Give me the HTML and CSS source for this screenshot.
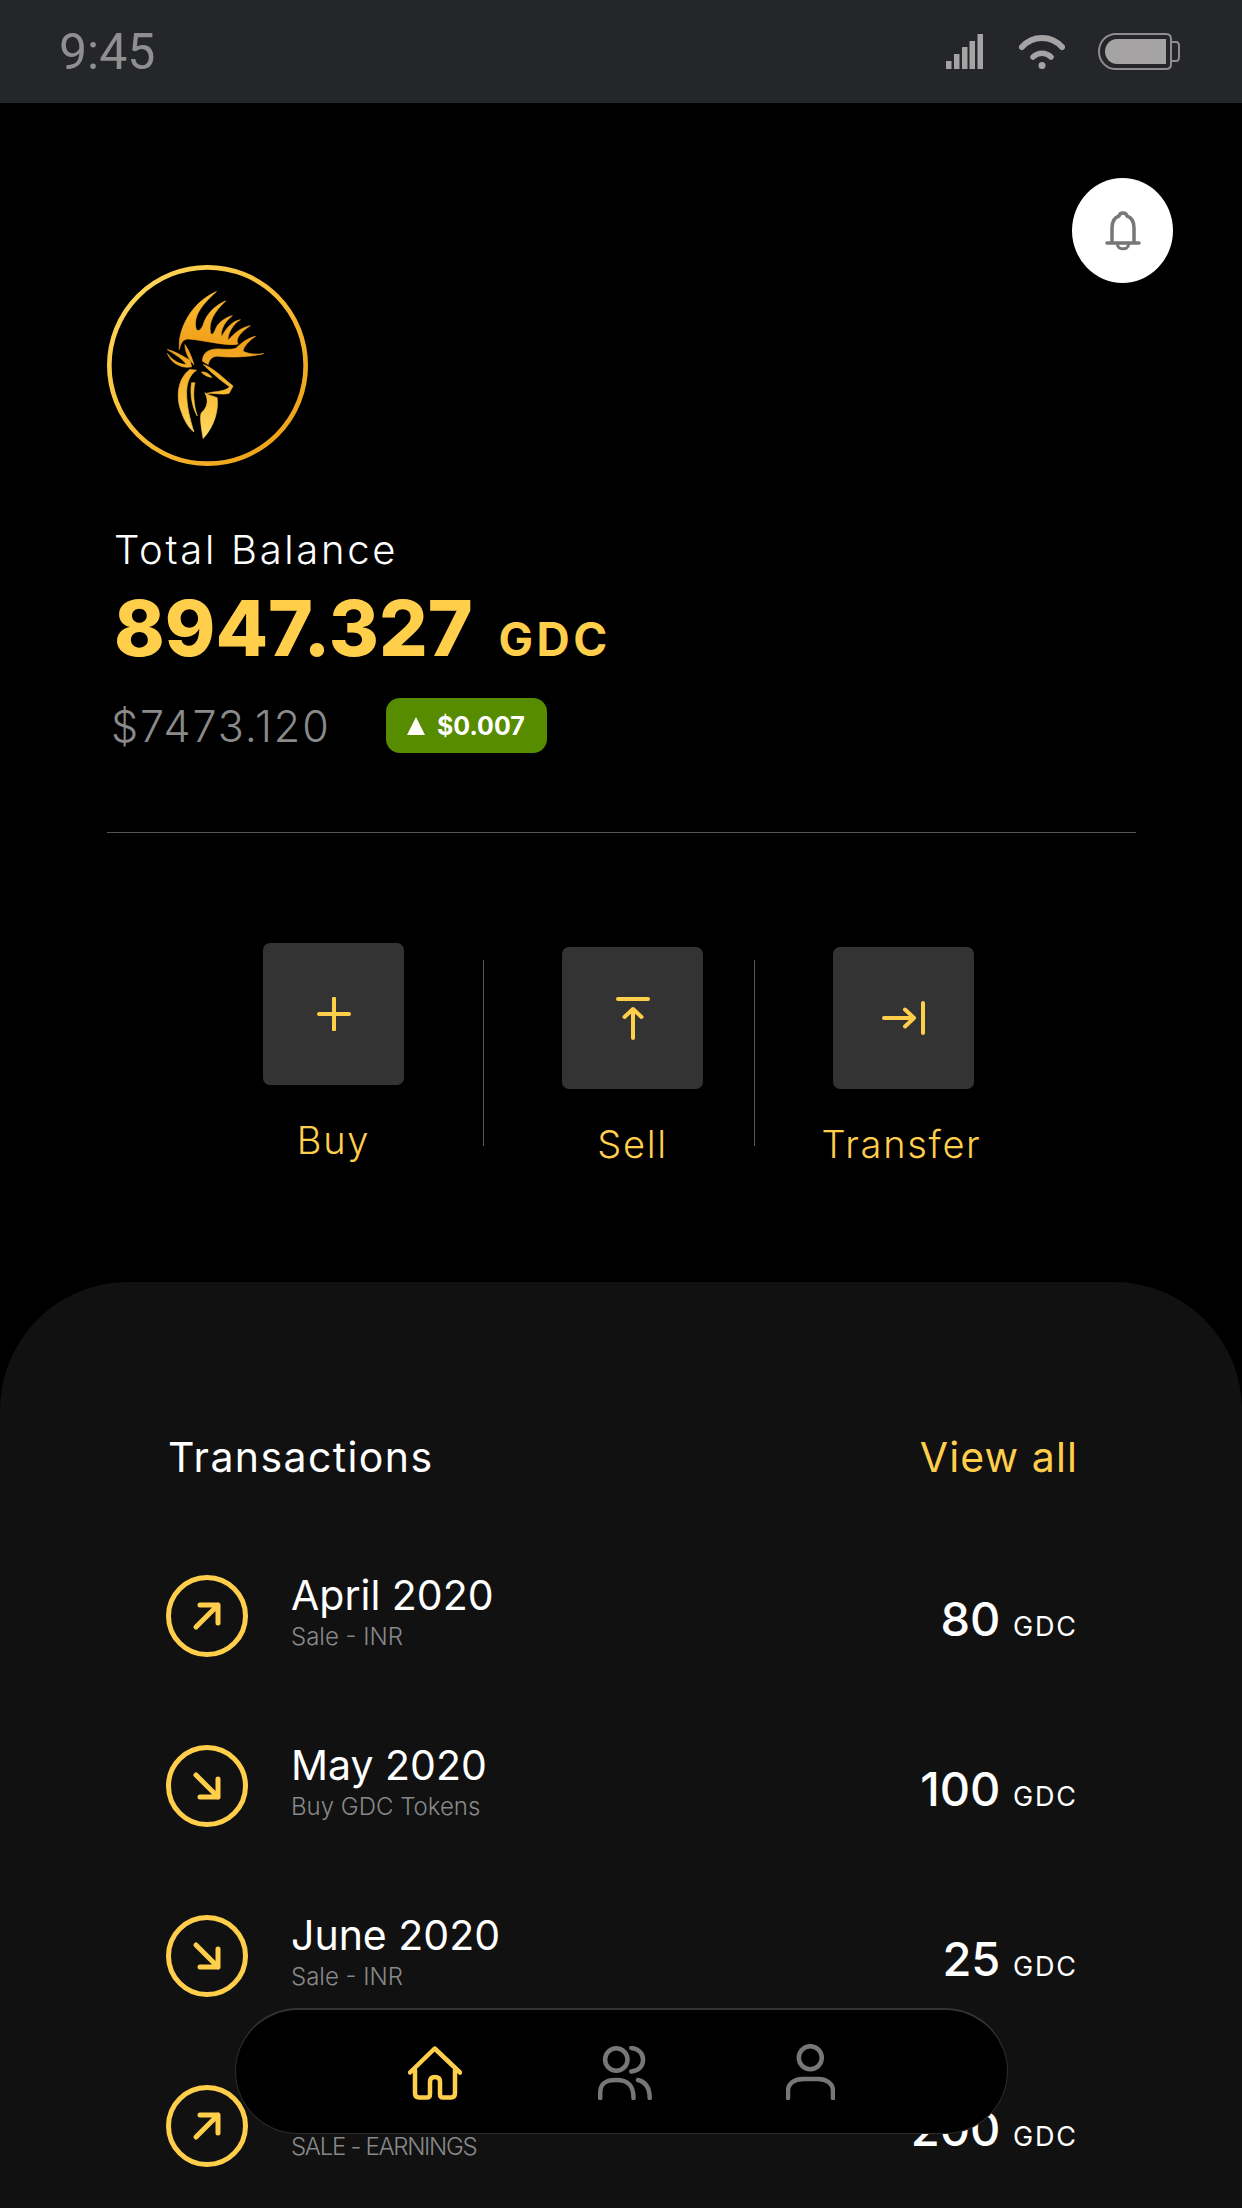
FILE: index.html
```html
<!DOCTYPE html>
<html lang="en">
<head>
  <meta charset="UTF-8">
  <meta name="viewport" content="width=device-width, initial-scale=1.0">
  <title>GDC Wallet</title>
  <link rel="stylesheet" href="styles.css">
</head>
<body>
  <div class="app">
    <div class="status-bar">
      <span class="status-time">9:45</span>
      <div class="status-icons">
        <svg class="icon-signal" width="37" height="35" viewBox="0 0 37 35" fill="#a5a3a3">
          <rect x="0" y="27" width="5.5" height="8"/>
          <rect x="8" y="20" width="5.5" height="15"/>
          <rect x="16" y="13" width="5.5" height="22"/>
          <rect x="23.5" y="7" width="5.5" height="28"/>
          <rect x="31.5" y="0" width="5.5" height="35"/>
        </svg>
        <svg class="icon-wifi" width="46" height="35" viewBox="0 0 46 35" fill="none" stroke="#a5a3a3" stroke-linecap="round">
          <path d="M3 13 C14 1 32 1 43 13" stroke-width="6"/>
          <path d="M14 23 C19 18 27 18 32 23" stroke-width="5.5"/>
          <circle cx="23" cy="31.5" r="3.5" fill="#a5a3a3" stroke="none"/>
        </svg>
        <svg class="icon-battery" width="83" height="37" viewBox="0 0 83 37" fill="none">
          <path d="M18 1 H68 Q73 1 73 6 V31 Q73 36 68 36 H18 C8 36 1 28 1 18.5 C1 9 8 1 18 1 Z" stroke="#8f8d8d" stroke-width="2"/>
          <path d="M19 6 H68 V31 H19 C12 31 7 25 7 18.5 C7 12 12 6 19 6 Z" fill="#a5a3a3"/>
          <path d="M73 9 H78 Q81 9 81 13 V24 Q81 28 78 28 H73" stroke="#8f8d8d" stroke-width="2"/>
        </svg>
      </div>
    </div>

    <div class="hero">
      <div class="hero-top">
        <svg class="logo" width="201" height="201" viewBox="50 45 606 606">
          <defs>
            <linearGradient id="ringGold" x1="0" y1="0" x2="1" y2="1">
              <stop offset="0" stop-color="#ffdc62"/>
              <stop offset="0.55" stop-color="#f7b92f"/>
              <stop offset="1" stop-color="#ea9a12"/>
            </linearGradient>
            <linearGradient id="deerGold" gradientUnits="userSpaceOnUse" x1="0" y1="125" x2="0" y2="568">
              <stop offset="0" stop-color="#ffbe33"/>
              <stop offset="0.35" stop-color="#f0a01a"/>
              <stop offset="0.7" stop-color="#f8bc35"/>
              <stop offset="1" stop-color="#ffdb66"/>
            </linearGradient>
          </defs>
          <circle cx="353" cy="348" r="296" fill="none" stroke="url(#ringGold)" stroke-width="14"/>
          <g fill="url(#deerGold)" stroke="url(#deerGold)" stroke-width="2">
            <path d="M268 285 C268 240 300 160 380 125 C335 165 310 200 318 235 C322 250 335 240 340 225 C350 190 380 165 408 153 C375 185 355 215 362 250 C368 262 375 245 380 232 C390 215 410 202 428 198 C405 215 392 240 395 262 C402 250 420 215 452 210 C430 222 412 255 415 272 C425 262 445 235 482 228 C455 245 435 268 445 283 C420 292 330 270 295 268 C280 268 272 280 268 300 Z"/>
            <path d="M338 335 C338 310 355 298 385 298 C410 300 430 300 440 295 C455 280 475 265 498 260 C480 272 462 290 460 305 C480 315 505 315 522 312 C490 322 420 325 385 320 C370 320 360 325 355 345 Z"/>
            <path d="M232 300 C255 305 275 318 300 332 L305 352 C280 358 245 345 232 312 C250 335 270 345 290 345 C275 325 250 312 232 300 Z"/>
            <path d="M285 285 C295 300 305 320 312 345 C300 335 285 310 285 285 Z"/>
            <path d="M340 345 C360 350 390 375 412 395 L430 410 L418 432 C400 438 375 430 352 432 C375 425 405 428 420 412 C395 395 365 370 340 345 Z"/>
            <path d="M335 368 C345 366 358 372 366 384 C355 382 344 378 335 368 Z"/>
            <path d="M300 360 C265 385 255 440 275 490 C285 520 300 540 312 548 C300 510 290 470 290 430 C290 400 300 375 320 362 Z"/>
            <path d="M345 430 C360 440 372 440 382 445 C387 480 375 530 340 568 C335 540 328 500 335 490 C352 475 358 455 345 430 Z"/>
            <path d="M305 400 C300 430 305 470 322 500 C312 470 308 430 315 400 Z"/>
          </g>
        </svg>
        <button class="bell-btn">
          <svg width="36" height="40" viewBox="0 0 36 40" fill="none" stroke="#777" stroke-width="3.5" stroke-linecap="round" stroke-linejoin="round">
            <path d="M7 31 V17 C7 9 11 6 14 5 C15 1 21 1 22 5 C25 6 29 9 29 17 V31"/>
            <path d="M2 32 H34"/>
            <path d="M12.5 34 C13.5 39 22.5 39 23.5 34" stroke-width="3"/>
          </svg>
        </button>
      </div>

      <div class="balance">
        <div class="balance-label">Total Balance</div>
        <div class="balance-amount">8947.327 <span class="balance-unit">GDC</span></div>
        <div class="balance-fiat">
          <span class="fiat-value">$7473.120</span>
          <span class="change-badge"><span class="change-arrow"></span>$0.007</span>
        </div>
      </div>

      <div class="divider"></div>

      <div class="actions">
        <div class="action action-buy">
          <div class="action-box">
            <svg width="34" height="34" viewBox="0 0 34 34" fill="none" stroke="#ffce4b" stroke-width="4" stroke-linecap="round">
              <path d="M2 17 H32 M17 1.5 V32.5"/>
            </svg>
          </div>
          <span class="action-label">Buy</span>
        </div>
        <div class="action-sep"></div>
        <div class="action">
          <div class="action-box">
            <svg width="34" height="43" viewBox="0 0 34 43" fill="none" stroke="#ffce4b" stroke-width="4" stroke-linecap="round" stroke-linejoin="round">
              <path d="M2 2 H32"/>
              <path d="M17 41 V12 M8.5 20 L17 12 L25.5 20"/>
            </svg>
          </div>
          <span class="action-label">Sell</span>
        </div>
        <div class="action-sep action-sep-narrow"></div>
        <div class="action action-transfer">
          <div class="action-box">
            <svg width="43" height="34" viewBox="0 0 43 34" fill="none" stroke="#ffce4b" stroke-width="4" stroke-linecap="round" stroke-linejoin="round">
              <path d="M2 17 H32 M23 8.5 L32 17 L23 25.5"/>
              <path d="M41 2 V32"/>
            </svg>
          </div>
          <span class="action-label">Transfer</span>
        </div>
      </div>
    </div>

    <div class="sheet">
      <div class="sheet-head">
        <span class="sheet-title">Transactions</span>
        <span class="view-all">View all</span>
      </div>

      <div class="tx-row">
        <svg class="tx-icon" width="82" height="82" viewBox="-41 -41 82 82" fill="none" stroke="#ffce4b" stroke-width="5" stroke-linecap="round" stroke-linejoin="round">
          <circle r="38.5"/>
          <path d="M-11 11 L11 -11 M-7 -11 H11 V7"/>
        </svg>
        <div class="tx-info">
          <div class="tx-title">April 2020</div>
          <div class="tx-sub">Sale - INR</div>
        </div>
        <div class="tx-amount">80 <span class="tx-unit">GDC</span></div>
      </div>

      <div class="tx-row">
        <svg class="tx-icon" width="82" height="82" viewBox="-41 -41 82 82" fill="none" stroke="#ffce4b" stroke-width="5" stroke-linecap="round" stroke-linejoin="round">
          <circle r="38.5"/>
          <path d="M-11 -11 L11 11 M11 -7 V11 H-7"/>
        </svg>
        <div class="tx-info">
          <div class="tx-title">May 2020</div>
          <div class="tx-sub">Buy GDC Tokens</div>
        </div>
        <div class="tx-amount">100 <span class="tx-unit">GDC</span></div>
      </div>

      <div class="tx-row">
        <svg class="tx-icon" width="82" height="82" viewBox="-41 -41 82 82" fill="none" stroke="#ffce4b" stroke-width="5" stroke-linecap="round" stroke-linejoin="round">
          <circle r="38.5"/>
          <path d="M-11 -11 L11 11 M11 -7 V11 H-7"/>
        </svg>
        <div class="tx-info">
          <div class="tx-title">June 2020</div>
          <div class="tx-sub">Sale - INR</div>
        </div>
        <div class="tx-amount">25 <span class="tx-unit">GDC</span></div>
      </div>

      <div class="tx-row">
        <svg class="tx-icon" width="82" height="82" viewBox="-41 -41 82 82" fill="none" stroke="#ffce4b" stroke-width="5" stroke-linecap="round" stroke-linejoin="round">
          <circle r="38.5"/>
          <path d="M-11 11 L11 -11 M-7 -11 H11 V7"/>
        </svg>
        <div class="tx-info">
          <div class="tx-title">July 2020</div>
          <div class="tx-sub tx-sub-caps">SALE - EARNINGS</div>
        </div>
        <div class="tx-amount">200 <span class="tx-unit">GDC</span></div>
      </div>
    </div>

    <div class="bottom-nav">
      <svg class="nav-home" width="54" height="54" viewBox="0 0 54 54" fill="none" stroke="#ffce4b" stroke-width="4.5" stroke-linecap="round" stroke-linejoin="round">
        <path d="M2 26.5 L26.7 2.5 L52 26.5"/>
        <path d="M7 24 V47 Q7 51.5 11 51.5 H19 Q22 51.5 22 48 V36 Q22 31 27 31 Q32 31 32 36 V48 Q32 51.5 35 51.5 H43 Q47 51.5 47 47 V24"/>
      </svg>
      <svg class="nav-people" width="54" height="54" viewBox="0 0 54 54" fill="none" stroke="#777" stroke-width="4.5" stroke-linecap="round">
        <circle cx="18.3" cy="13.5" r="11.2"/>
        <path d="M33.3 2 C49 3 49 24.5 33.3 25.5"/>
        <path d="M2.2 52 V47 C2.2 37 8 34 18 34 C30 34 35.5 39 35.5 52"/>
        <path d="M40 34 C48 36 51.7 42 51.7 52"/>
      </svg>
      <svg class="nav-person" width="49" height="56" viewBox="0 0 49 56" fill="none" stroke="#777" stroke-width="4.5" stroke-linecap="round">
        <circle cx="24.3" cy="13.7" r="11.5"/>
        <path d="M2 54 V47 C2 39 9 35 17 35 H32 C40 35 47 39 47 47 V54"/>
      </svg>
    </div>
  </div>
</body>
</html>
```

FILE: styles.css
```css
* {
  box-sizing: border-box;
}
body {
  margin: 0;
  background: #000;
  font-family: Inter, "Liberation Sans", sans-serif;
}
.app {
  position: relative;
  display: flex;
  flex-direction: column;
  width: 1242px;
  height: 2208px;
  overflow: hidden;
  background: #000;
}

/* status bar */
.status-bar {
  display: flex;
  justify-content: space-between;
  align-items: center;
  flex: none;
  height: 103px;
  padding: 0 61px 0 59px;
  background: #252629;
}
.status-time {
  color: #8f8f8f;
  font-family: Roboto, sans-serif;
  font-size: 50px;
}
.status-icons {
  display: flex;
  align-items: center;
  gap: 36px;
}
.icon-battery {
  margin-left: -3px;
}

/* balance */
.hero {
  flex: none;
  padding-top: 75px;
}
.hero-top {
  display: flex;
  justify-content: space-between;
  align-items: flex-start;
  padding: 0 69px 0 107px;
}
.logo {
  margin-top: 87px;
}
.bell-btn {
  display: flex;
  justify-content: center;
  align-items: center;
  width: 101px;
  height: 105px;
  padding: 0;
  border: none;
  border-radius: 50%;
  background: #fff;
}
.balance {
  padding: 60px 0 0 114px;
}
.balance-label {
  color: #fff;
  font-size: 40px;
  font-weight: 300;
  line-height: 48px;
  letter-spacing: 2.7px;
}
.balance-amount {
  margin-top: 14px;
  color: #ffce4b;
  font-size: 76.5px;
  font-weight: 800;
  line-height: 80px;
}
.balance-unit {
  margin-left: 9px;
  font-size: 46px;
  font-weight: 700;
  letter-spacing: 3.5px;
}
.balance-fiat {
  display: flex;
  align-items: center;
  height: 55px;
  margin-top: 19px;
  margin-left: -3px;
}
.fiat-value {
  width: 275px;
  color: #8a8a8a;
  font-size: 43px;
  font-weight: 300;
  letter-spacing: 1.9px;
}
.change-badge {
  display: flex;
  align-items: center;
  gap: 12px;
  width: 161px;
  height: 55px;
  padding-left: 21px;
  border-radius: 14px;
  background: #578c00;
  color: #fff;
  font-size: 25px;
  font-weight: 700;
}
.change-arrow {
  width: 0;
  height: 0;
  border-left: 9px solid transparent;
  border-right: 9px solid transparent;
  border-bottom: 18px solid #fff;
}
.divider {
  width: 1029px;
  height: 1px;
  margin: 79px 0 0 107px;
  background: #555;
}

/* buy, sell, transfer */
.actions {
  display: flex;
  align-items: flex-start;
  height: 339px;
  margin-top: 110px;
  padding-left: 263px;
}
.action {
  display: flex;
  flex-direction: column;
  align-items: center;
  width: 141px;
  margin-top: 4px;
}
.action-buy {
  margin-top: 0;
}
.action-box {
  display: flex;
  justify-content: center;
  align-items: center;
  width: 141px;
  height: 142px;
  border-radius: 7px;
  background: #333;
}
.action-label {
  margin-top: 31px;
  color: #ffce4b;
  font-size: 38px;
  font-weight: 300;
  line-height: 48px;
  letter-spacing: 1.7px;
  white-space: nowrap;
}
.action-transfer .action-label {
  margin-right: 4px;
}
.action-sep {
  width: 1px;
  height: 186px;
  margin: 17px 78px 0 79px;
  background: #555;
}
.action-sep-narrow {
  margin-left: 51px;
}

/* transactions */
.sheet {
  flex: 1;
  padding: 145px 164px 0 166px;
  border-radius: 128px 128px 0 0;
  background: #111;
}
.sheet-head {
  display: flex;
  justify-content: space-between;
  align-items: center;
  height: 60px;
  padding-left: 2px;
  font-size: 41px;
}
.sheet-title {
  color: #fff;
  letter-spacing: 1.4px;
}
.view-all {
  color: #ffce4b;
  letter-spacing: 1.1px;
}
.tx-row {
  display: flex;
  align-items: center;
  height: 170px;
}
.sheet-head + .tx-row {
  margin-top: 44px;
}
.tx-icon {
  flex: none;
}
.tx-info {
  margin: 0 0 10px 43px;
}
.tx-title {
  margin-bottom: 3px;
  color: #fff;
  font-size: 41px;
  line-height: 48px;
}
.tx-sub {
  color: #888;
  font-size: 24px;
  font-weight: 300;
  line-height: 30px;
}
.tx-sub-caps {
  letter-spacing: -1.3px;
}
.tx-amount {
  margin-left: auto;
  padding-top: 5px;
  color: #fff;
  font-size: 47px;
  font-weight: 500;
}
.tx-unit {
  margin-left: 0;
  font-size: 27px;
  font-weight: 400;
  letter-spacing: 1.9px;
}

/* floating nav, sits over the list */
.bottom-nav {
  position: absolute;
  left: 235px;
  top: 2008px;
  width: 773px;
  height: 126px;
  border: 1px solid #2c2c2c;
  border-top: 2px solid #333;
  border-radius: 63px;
  background: #000;
}
.bottom-nav svg {
  position: absolute;
}
.nav-home {
  left: 172px;
  top: 36px;
}
.nav-people {
  left: 362px;
  top: 36px;
}
.nav-person {
  left: 550px;
  top: 34px;
}
```
